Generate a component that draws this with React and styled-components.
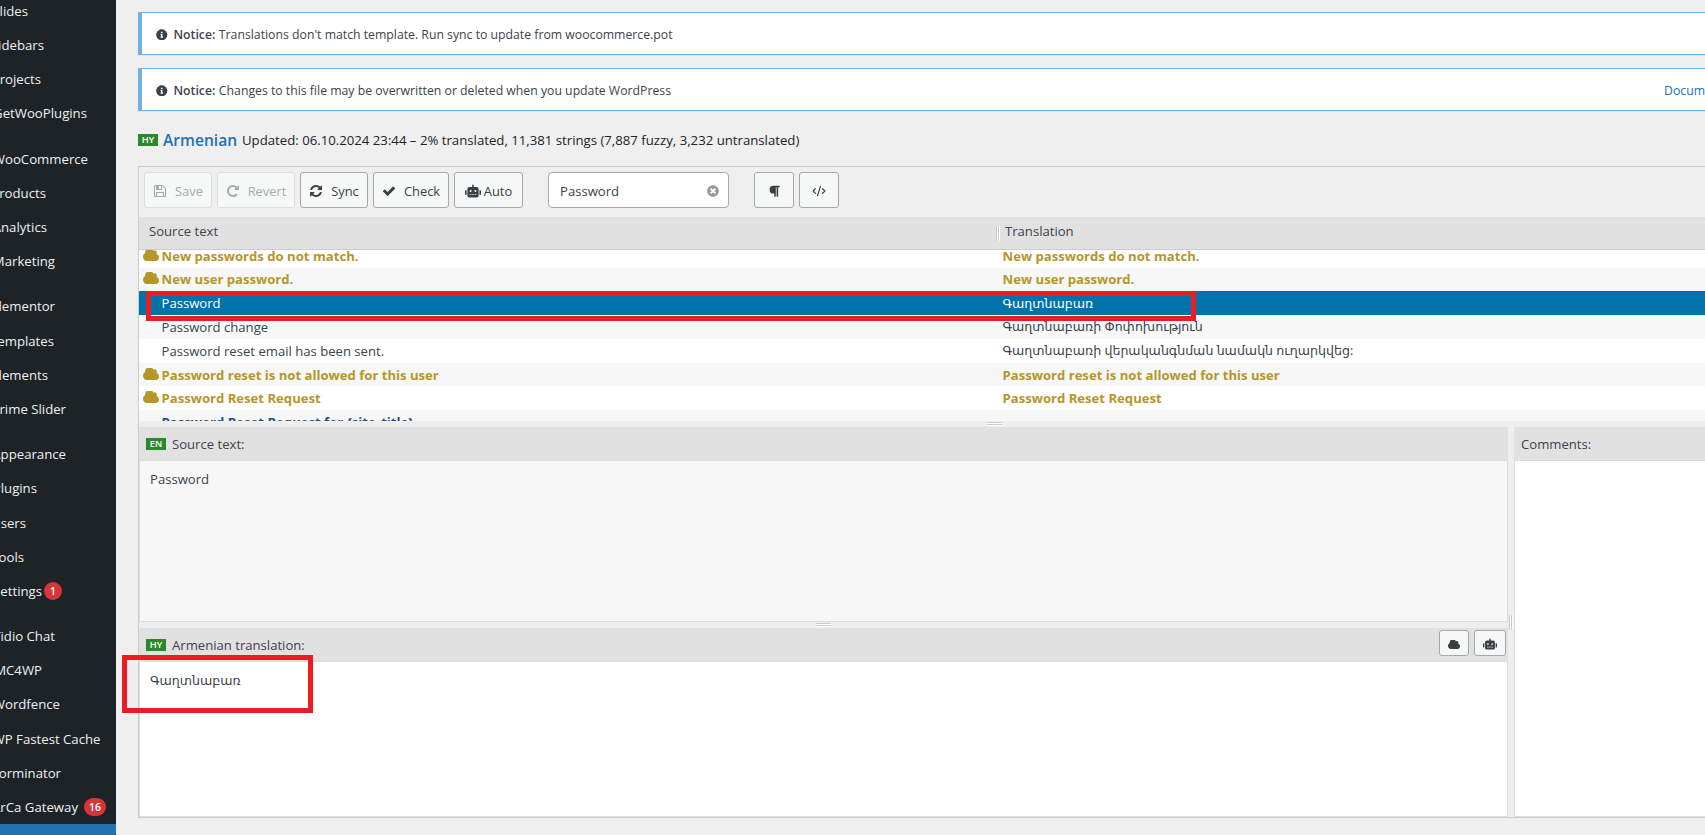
import styled, { createGlobalStyle } from "styled-components";
import { FaInfoCircle, FaParagraph, FaRobot, FaTimesCircle } from "react-icons/fa";
import { CodeXml } from "lucide-react";

// label, right edge of the label, counter
const menu = [
  [
    ["Slides", 28],
    ["Sidebars", 44],
    ["Projects", 41],
    ["GetWooPlugins", 87],
  ],
  [
    ["WooCommerce", 88],
    ["Products", 46],
    ["Analytics", 47],
    ["Marketing", 55],
  ],
  [
    ["Elementor", 55],
    ["Templates", 54],
    ["Elements", 48],
    ["Prime Slider", 66],
  ],
  [
    ["Appearance", 66],
    ["Plugins", 37],
    ["Users", 26],
    ["Tools", 24],
    ["Settings", 42, "1"],
  ],
  [
    ["Tidio Chat", 55],
    ["MC4WP", 42],
    ["Wordfence", 60],
    ["WP Fastest Cache", 100.5],
    ["Forminator", 61],
    ["ArCa Gateway", 78, "16"],
  ],
];

const strings = [
  { source: "New passwords do not match.", target: "New passwords do not match.", state: "fuzzy" },
  { source: "New user password.", target: "New user password.", state: "fuzzy" },
  { source: "Password", target: "Գաղտնաբառ", state: "selected" },
  { source: "Password change", target: "Գաղտնաբառի Փոփոխություն" },
  { source: "Password reset email has been sent.", target: "Գաղտնաբառի վերականգնման նամակն ուղարկվեց:" },
  {
    source: "Password reset is not allowed for this user",
    target: "Password reset is not allowed for this user",
    state: "fuzzy",
  },
  { source: "Password Reset Request", target: "Password Reset Request", state: "fuzzy" },
  { source: "Password Reset Request for {site_title}", target: "", state: "empty" },
];

const CloudIcon = ({ width = 16, height = 12 }) => (
  <svg width={width} height={height} viewBox="64 256 1920 1280" preserveAspectRatio="none" fill="currentColor">
    <path d="M1984 1152q0 159-112.5 271.5t-271.5 112.5h-1088q-185 0-316.5-131.5t-131.5-316.5q0-132 71-241.5t187-163.5q-2-28-2-43 0-212 150-362t362-150q158 0 286.5 88t187.5 230q70-62 166-62 106 0 181 75t75 181q0 75-41 138 129 30 213 134.5t84 239.5z" />
  </svg>
);

const SaveIcon = () => (
  <svg width="14" height="14" viewBox="0 0 1792 1792" fill="currentColor">
    <path d="M512 1536h768v-384h-768v384zm896 0h128v-896q0-14-10-38.5t-20-34.5l-281-281q-10-10-34-20t-39-10v416q0 40-28 68t-68 28h-576q-40 0-68-28t-28-68v-416h-128v1280h128v-416q0-40 28-68t68-28h832q40 0 68 28t28 68v416zm-384-928v-320q0-13-9.5-22.5t-22.5-9.5h-192q-13 0-22.5 9.5t-9.5 22.5v320q0 13 9.5 22.5t22.5 9.5h192q13 0 22.5-9.5t9.5-22.5zm640 32v928q0 40-28 68t-68 28h-1344q-40 0-68-28t-28-68v-1344q0-40 28-68t68-28h928q40 0 88 20t76 48l280 280q28 28 48 76t20 88z" />
  </svg>
);

const RevertIcon = () => (
  <svg width="14" height="14" viewBox="0 0 1792 1792" fill="currentColor">
    <path d="M1664 256v448q0 26-19 45t-45 19h-448q-42 0-59-40-17-39 14-69l138-138q-148-137-349-137-104 0-198.5 40.5t-163.5 109.5-109.5 163.5-40.5 198.5 40.5 198.5 109.5 163.5 163.5 109.5 198.5 40.5q119 0 225-52t179-147q7-10 23-12 15 0 25 9l137 138q9 8 9.5 20.5t-7.5 22.5q-109 132-264 204.5t-327 72.5q-156 0-298-61t-245-164-164-245-61-298 61-298 164-245 245-164 298-61q147 0 284.5 55.5t244.5 156.5l130-129q29-31 70-14 39 17 39 59z" />
  </svg>
);

const SyncIcon = () => (
  <svg width="14" height="14" viewBox="0 0 1792 1792" fill="currentColor">
    <path d="M1639 1056q0 5-1 7-64 268-268 434.5t-478 166.5q-146 0-282.5-55t-243.5-157l-129 129q-19 19-45 19t-45-19-19-45v-448q0-26 19-45t45-19h448q26 0 45 19t19 45-19 45l-137 137q71 66 161 102t187 36q134 0 250-65t186-179q11-17 53-117 8-23 30-23h192q13 0 22.5 9.5t9.5 22.5zm25-800v448q0 26-19 45t-45 19h-448q-26 0-45-19t-19-45 19-45l138-138q-148-137-349-137-134 0-250 65t-186 179q-11 17-53 117-8 23-30 23h-199q-13 0-22.5-9.5t-9.5-22.5v-7q65-268 270-434.5t480-166.5q146 0 284 55.5t245 156.5l130-129q19-19 45-19t45 19 19 45z" />
  </svg>
);

const CheckIcon = () => (
  <svg width="14" height="14" viewBox="0 0 1792 1792" fill="currentColor">
    <path d="M1671 566q0 40-28 68l-724 724-136 136q-28 28-68 28t-68-28l-136-136-362-362q-28-28-28-68t28-68l136-136q28-28 68-28t68 28l294 295 656-657q28-28 68-28t68 28l136 136q28 28 28 68z" />
  </svg>
);

export default function App() {
  return (
    <>
      <GlobalStyle />
      <Page>
        <Sidebar>
          {menu.map((group, i) => (
            <MenuGroup key={i}>
              {group.map(([label, end, count]) => (
                <MenuItem key={label}>
                  <MenuLabel $end={end}>{label}</MenuLabel>
                  {count && <Counter $wide={count.length > 1}>{count}</Counter>}
                </MenuItem>
              ))}
            </MenuGroup>
          ))}
          <MenuCurrent />
        </Sidebar>
        <Main>
          <Notice>
            <FaInfoCircle size={11.5} />
            <strong>Notice:</strong>
            <span>Translations don't match template. Run sync to update from woocommerce.pot</span>
          </Notice>
          <Notice>
            <FaInfoCircle size={11.5} />
            <strong>Notice:</strong>
            <span>Changes to this file may be overwritten or deleted when you update WordPress</span>
            <NoticeLink>Documentation</NoticeLink>
          </Notice>
          <FileHeading>
            <Lang>HY</Lang>
            <FileTitle>Armenian</FileTitle>
            <FileStatus>Updated: 06.10.2024 23:44 – 2% translated, 11,381 strings (7,887 fuzzy, 3,232 untranslated)</FileStatus>
          </FileHeading>
          <Editor>
            <Toolbar>
              <Button $width={68} $disabled>
                <SaveIcon />
                Save
              </Button>
              <Button $width={78} $disabled>
                <RevertIcon />
                Revert
              </Button>
              <Button $width={68}>
                <SyncIcon />
                Sync
              </Button>
              <Button $width={76}>
                <CheckIcon />
                Check
              </Button>
              <Button $width={69} $gap={3}>
                <FaRobot size={16} />
                Auto
              </Button>
              <Search>
                <span>Password</span>
                <FaTimesCircle size={12} />
              </Search>
              <Button $width={40}>
                <FaParagraph size={12.5} />
              </Button>
              <Button $width={40}>
                <CodeXml size={14} strokeWidth={2} />
              </Button>
            </Toolbar>
            <ListHead>
              <SourceHead>Source text</SourceHead>
              <ColumnGrip />
              <span>Translation</span>
            </ListHead>
            <List>
              <ListScroll>
                {strings.map(({ source, target, state }) => (
                  <Row key={source} $state={state}>
                    <RowIcon>{state === "fuzzy" && <CloudIcon />}</RowIcon>
                    <SourceCell>{source}</SourceCell>
                    {state === "fuzzy" ? <span>{target}</span> : <Armenian>{target}</Armenian>}
                  </Row>
                ))}
              </ListScroll>
            </List>
            <RowSplit $offset={848}>
              <RowGrip />
            </RowSplit>
            <Panels>
              <TextPanels>
                <PanelHead>
                  <Lang>EN</Lang>
                  Source text:
                </PanelHead>
                <SourceBody>Password</SourceBody>
                <RowSplit $offset={677}>
                  <RowGrip />
                </RowSplit>
                <PanelHead>
                  <Lang>HY</Lang>
                  Armenian translation:
                  <PanelActions>
                    <SmallButton $width={30}>
                      <CloudIcon width={12} height={9} />
                    </SmallButton>
                    <SmallButton $width={32}>
                      <FaRobot size={14} />
                    </SmallButton>
                  </PanelActions>
                </PanelHead>
                <TargetBody>
                  <Armenian>Գաղտնաբառ</Armenian>
                </TargetBody>
              </TextPanels>
              <ColumnSplit>
                <ColumnGrip $bare />
              </ColumnSplit>
              <CommentsPanel>
                <PanelHead>Comments:</PanelHead>
                <CommentsBody />
              </CommentsPanel>
            </Panels>
          </Editor>
        </Main>
        <Marker $left={146} $top={291} $width={1050} $height={30} />
        <Marker $left={122} $top={655} $width={191} $height={58} />
      </Page>
    </>
  );
}

const GlobalStyle = createGlobalStyle`
  * {
    box-sizing: border-box;
  }
  body {
    margin: 0;
    background: #efefef;
    font-family: "Open Sans", "DejaVu Sans", sans-serif;
    font-size: 13.12px;
    color: #3c434a;
  }
  svg {
    flex: none;
  }
`;

const Page = styled.div`
  position: relative;
  display: flex;
  width: 1705px;
  height: 835px;
  overflow: hidden;
  white-space: nowrap;
`;

const Sidebar = styled.div`
  flex: none;
  width: 116px;
  height: 835px;
  background: #1d2327;
  color: #f0f0f1;
  font-size: 13.2px;
  overflow: hidden;
`;

const MenuGroup = styled.div`
  &:first-child {
    margin-top: -6.2px;
  }
  & + & {
    margin-top: 11px;
  }
`;

const MenuItem = styled.div`
  display: flex;
  align-items: center;
  height: 34.2px;
`;

const MenuLabel = styled.div`
  display: flex;
  justify-content: flex-end;
  width: ${props => props.$end}px;
`;

const Counter = styled.div`
  width: ${props => (props.$wide ? 22 : 18)}px;
  height: 18px;
  margin-left: ${props => (props.$wide ? 6 : 2)}px;
  border-radius: 9px;
  background: #d63638;
  color: #fff;
  font-size: 10.5px;
  font-weight: 600;
  line-height: 18px;
  text-align: center;
`;

const MenuCurrent = styled.div`
  height: 11px;
  background: #2271b1;
  border-bottom-right-radius: 2px;
`;

const Main = styled.div`
  flex: 1;
  min-width: 0;
  padding: 12px 0 0 22px;
  overflow: hidden;
`;

const Notice = styled.div`
  display: flex;
  align-items: center;
  height: 43px;
  margin-bottom: 13px;
  padding: 1.5px 0 0 14px;
  border: 1px solid #72aee6;
  border-left-width: 4px;
  border-right: 0;
  background: #fff;
  box-shadow: 0 1px 1px rgba(0, 0, 0, 0.04);
  font-size: 12.25px;
  strong {
    margin: 0 3.5px 0 6px;
    font-weight: 600;
  }
`;

const NoticeLink = styled.span`
  width: 41px;
  margin-left: auto;
  color: #2271b1;
`;

const FileHeading = styled.div`
  display: flex;
  align-items: center;
  height: 31px;
  margin-bottom: 11px;
  padding-top: 1px;
`;

const Lang = styled.span`
  flex: none;
  width: 20px;
  height: 12px;
  background: #298a2b;
  color: #fff;
  font-size: 9.3px;
  font-weight: 600;
  line-height: 12px;
  text-align: center;
`;

const FileTitle = styled.span`
  width: 79px;
  padding-left: 5px;
  color: #2271b1;
  font-size: 15.6px;
  font-weight: 600;
`;

const FileStatus = styled.span`
  margin-left: 5px;
  color: #1d2327;
  font-size: 13.2px;
`;

const Editor = styled.div`
  height: 652px;
  border: 1px solid #ccc;
  border-right: 0;
`;

const Toolbar = styled.div`
  display: flex;
  gap: 5px;
  height: 50px;
  padding: 5px;
`;

const Button = styled.div`
  display: flex;
  align-items: center;
  justify-content: center;
  gap: ${props => props.$gap || 8}px;
  width: ${props => props.$width}px;
  height: 36px;
  padding-top: 2px;
  border: 1px solid ${props => (props.$disabled ? "#dcdddd" : "#a5a7a8")};
  border-radius: 3px;
  background: #f6f8f7;
  color: ${props => (props.$disabled ? "#a7aaad" : "#3c3f42")};
  font-size: 12.9px;
`;

const Search = styled.div`
  display: flex;
  align-items: center;
  justify-content: space-between;
  width: 181px;
  height: 36px;
  margin: 0 20px;
  padding: 2px 9px 0 11px;
  border: 1px solid #a5a7a8;
  border-radius: 4px;
  background: #fff;
  svg {
    color: #999;
  }
`;

const ListHead = styled.div`
  display: flex;
  align-items: center;
  height: 33px;
  border-bottom: 1px solid #ccc;
  background: #e1e1e1;
  padding-bottom: 4px;
`;

const SourceHead = styled.div`
  width: 857px;
  padding-left: 10px;
`;

const ColumnGrip = styled.div`
  width: ${props => (props.$bare ? 4 : 9)}px;
  height: 15px;
  margin-top: ${props => (props.$bare ? 0 : 5)}px;
  background: linear-gradient(90deg, #ccc 1px, #fff 1px 2px, #ccc 2px 3px, #fff 3px 4px, transparent 4px);
`;

const List = styled.div`
  height: 171px;
  overflow: hidden;
  background: #fff;
`;

const ListScroll = styled.div`
  margin-top: -6.3px;
`;

const rowColor = {
  fuzzy: "#b59629",
  selected: "#fff",
  empty: "#1f4f7d",
};

const Row = styled.div`
  display: flex;
  align-items: center;
  height: 23.8px;
  background: ${props => (props.$state === "selected" ? "#0073aa" : "#fff")};
  color: ${props => rowColor[props.$state] || "#3c434a"};
  font-weight: ${props => (props.$state === "fuzzy" || props.$state === "empty" ? 700 : 400)};
  &:nth-child(even) {
    background: #f7f7f7;
  }
`;

const RowIcon = styled.div`
  display: flex;
  width: 22.5px;
  padding: 0 0 2px 3.5px;
`;

const SourceCell = styled.div`
  width: 841px;
`;

const Armenian = styled.span`
  font-size: 12.6px;
`;

const RowSplit = styled.div`
  height: 6px;
  padding: 1px 0 0 ${props => props.$offset}px;
  background: #eee;
`;

const RowGrip = styled.div`
  width: 15px;
  height: 4px;
  background: linear-gradient(#ccc 1px, #fff 1px 2px, #ccc 2px 3px, #fff 3px);
`;

const Panels = styled.div`
  display: flex;
  height: 390px;
`;

const TextPanels = styled.div`
  width: 1369px;
`;

const PanelHead = styled.div`
  display: flex;
  align-items: center;
  gap: 6px;
  height: 33px;
  padding-left: 7px;
  background: #e1e1e1;
`;

const PanelActions = styled.div`
  display: flex;
  gap: 5px;
  margin: 0 2px 3px auto;
`;

const SmallButton = styled(Button)`
  height: 26px;
`;

const SourceBody = styled.div`
  height: 162px;
  padding: 9px 0 0 10px;
  border: 1px solid #ddd;
  background: #f7f7f7;
`;

const TargetBody = styled(SourceBody)`
  height: 156px;
  background: #fff;
`;

const ColumnSplit = styled.div`
  width: 6px;
  padding: 188px 0 0 1px;
  background: #eee;
`;

const CommentsPanel = styled.div`
  flex: 1;
`;

const CommentsBody = styled.div`
  height: 357px;
  border: 1px solid #ddd;
  border-right: 0;
  background: #fff;
`;

const Marker = styled.div`
  position: absolute;
  left: ${props => props.$left}px;
  top: ${props => props.$top}px;
  width: ${props => props.$width}px;
  height: ${props => props.$height}px;
  border: 5px solid #ed1c24;
`;
